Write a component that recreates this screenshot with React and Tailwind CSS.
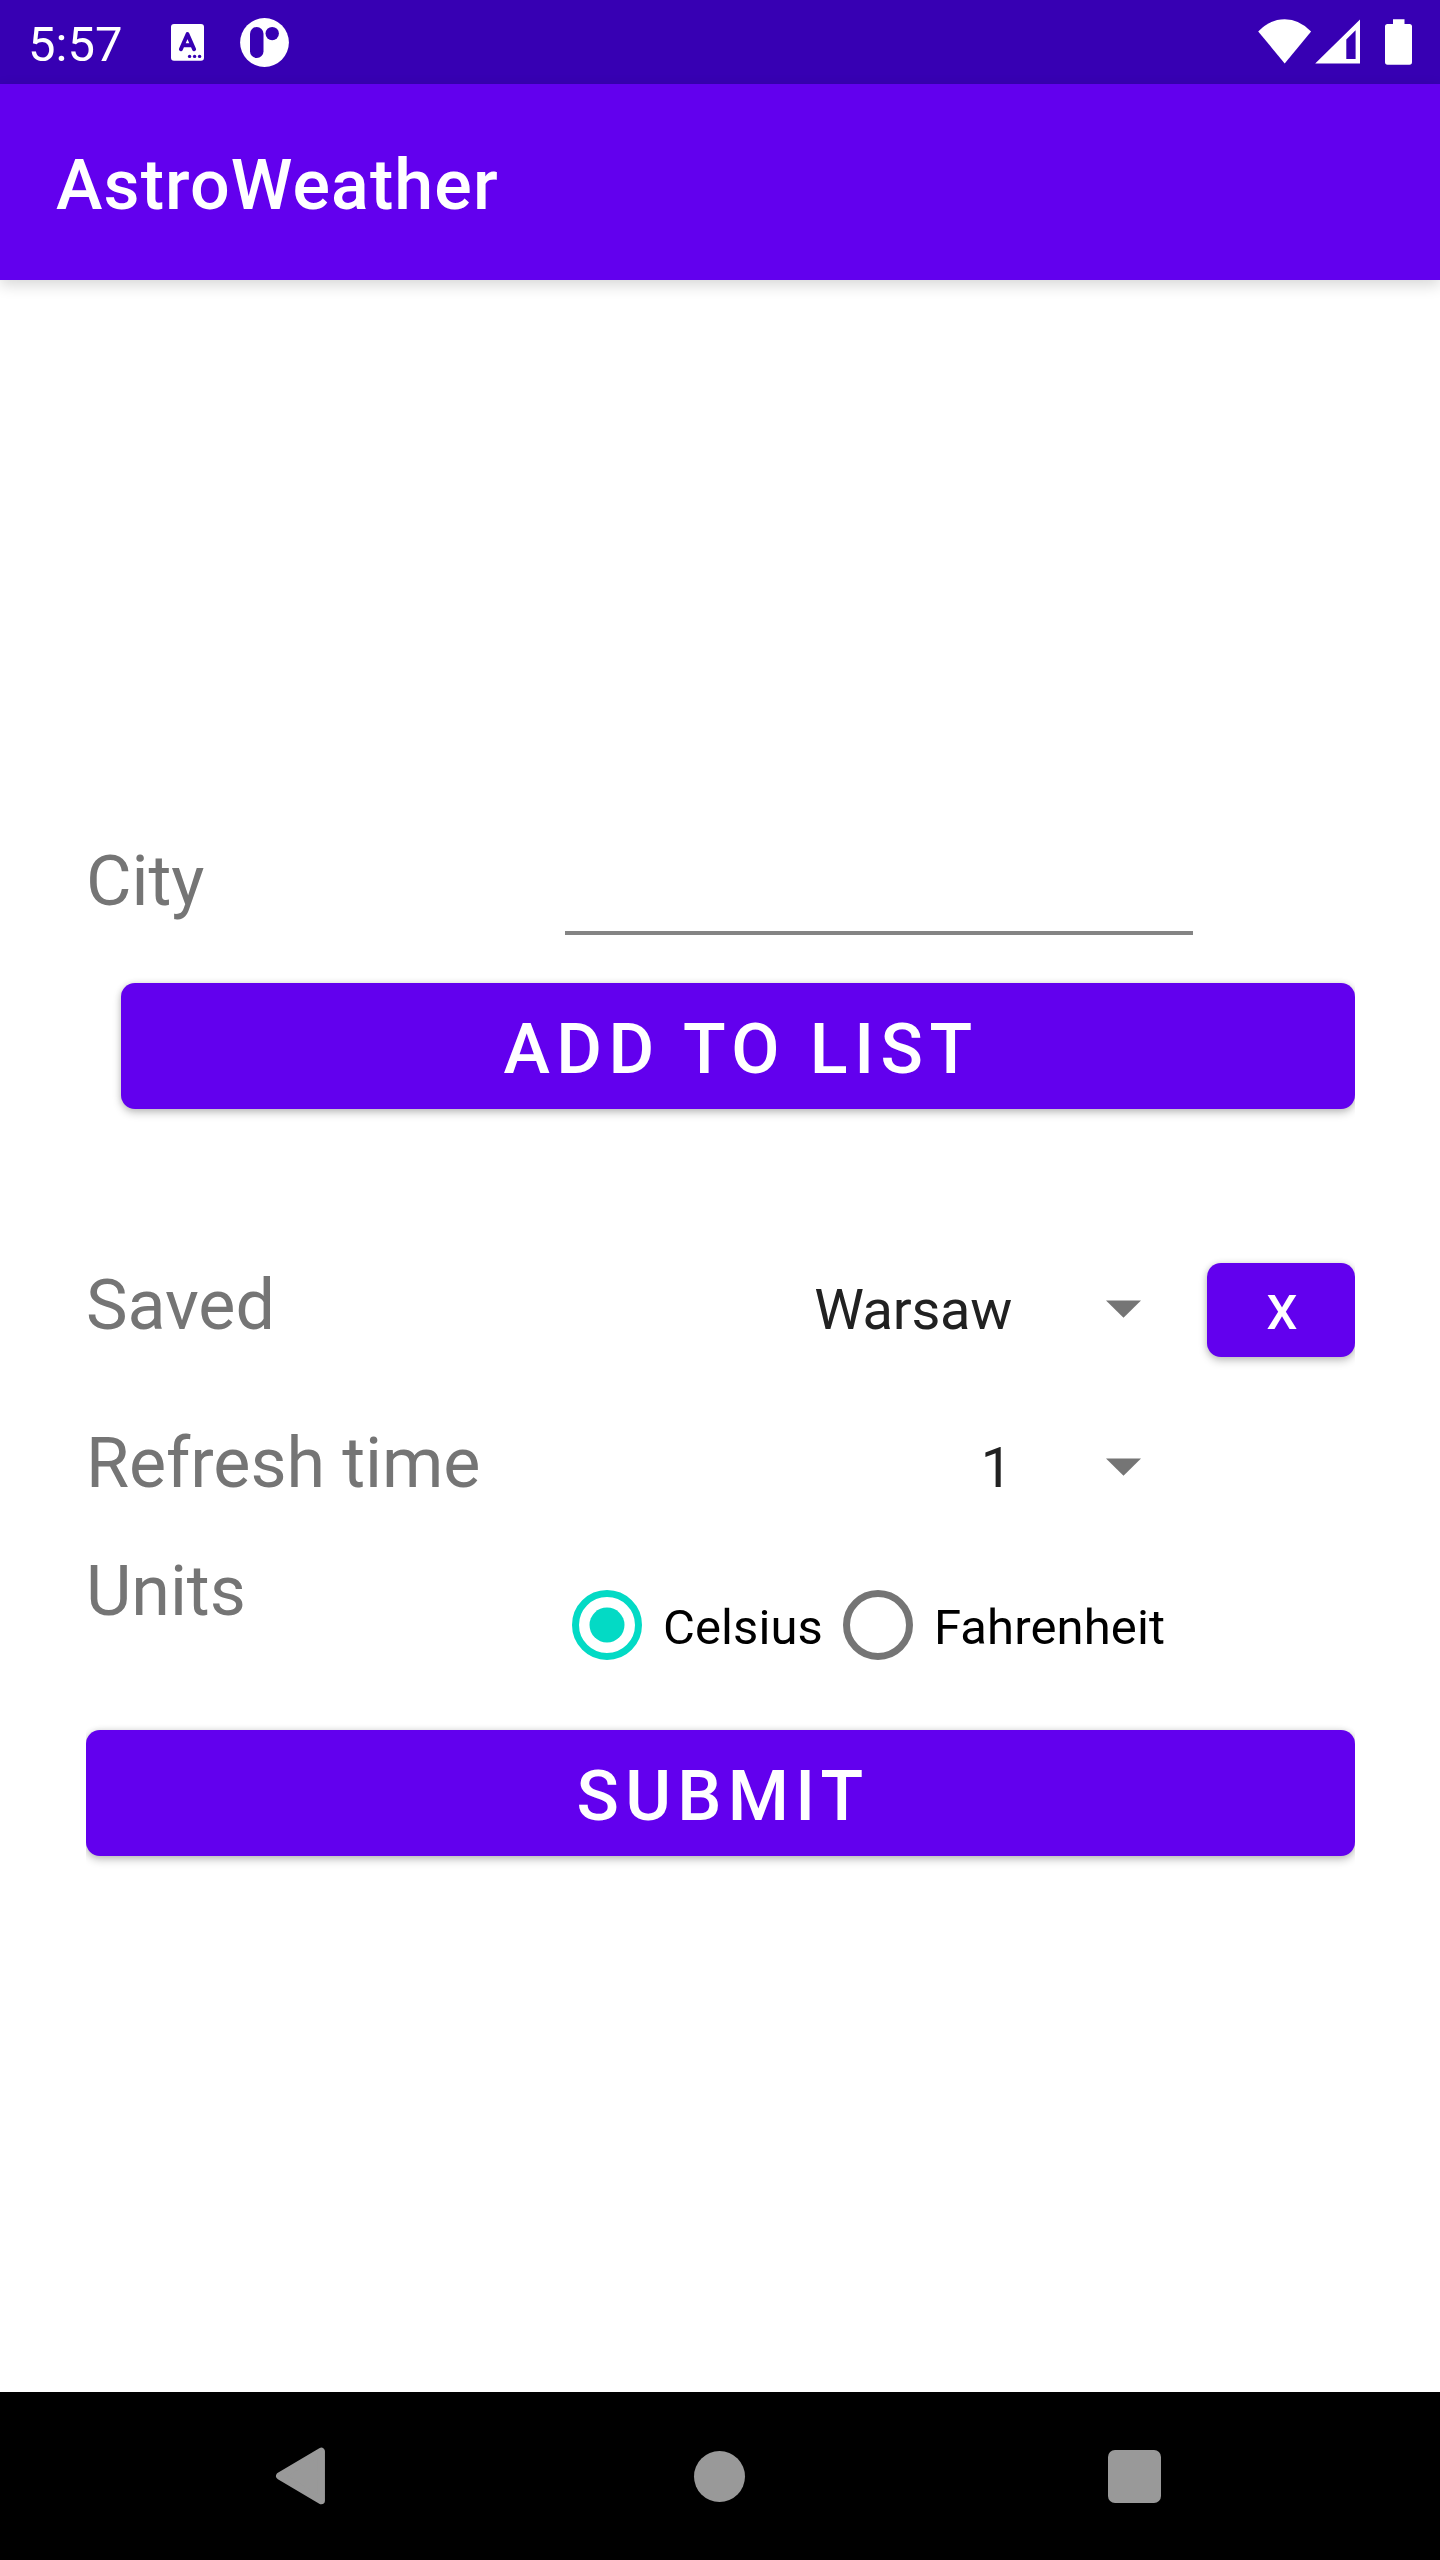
import React from "react";

const BUTTON =
  "flex items-center justify-center rounded-[14px] bg-[#6200ee] font-medium text-white shadow-[0_4px_8px_rgba(0,0,0,0.22),0_0_6px_rgba(0,0,0,0.12)]";
const LABEL = "text-[70px] leading-[100px] tracking-[-0.08px] text-[#757575] whitespace-nowrap";

function StatusBar() {
  return (
    <div className="flex h-[84px] items-center bg-[#3700b3] pl-[28px] text-white">
      <span className="w-[143px] pt-[5px] text-[49px] leading-[82px]">5:57</span>
      <svg width="33" height="84" viewBox="171 0 33 84">
        <rect x="171" y="24" width="33" height="36.7" rx="3" fill="#fff" />
        <path d="M180.9 49.2 L187.5 34.2 L194.1 49.2 M183 45.2 H192" fill="none" stroke="#3700b3" strokeWidth="4" strokeLinecap="round" strokeLinejoin="round" />
        <g fill="#3700b3">
          <circle cx="189.6" cy="56.4" r="1.7" />
          <circle cx="194.6" cy="56.4" r="1.7" />
          <circle cx="199.6" cy="56.4" r="1.7" />
        </g>
      </svg>
      <svg className="ml-[35px]" width="52" height="84" viewBox="239 0 52 84">
        <circle cx="264.5" cy="42.5" r="24.4" fill="#fff" />
        <rect x="250" y="27" width="13.5" height="31" rx="6.75" fill="#3700b3" />
        <circle cx="272.2" cy="33.6" r="6.7" fill="#3700b3" />
      </svg>
      <svg className="ml-auto" width="190" height="84" viewBox="1250 0 190 84" fill="#fff">
        <path d="M1258.2 31.5 Q1270 19.2 1284.7 19.2 Q1299.5 19.2 1311.1 31.5 L1284.7 63.4 Z" />
        <path fillRule="evenodd" d="M1315.2 63.6 L1360 19.6 V63.6 Z M1346.3 39.4 V59 H1355.6 V30.3 Z" />
        <path d="M1393 19.2 H1404.5 V24 H1409.5 Q1412 24 1412 26.5 V62 Q1412 64.8 1409.5 64.8 H1387.5 Q1385 64.8 1385 62 V26.5 Q1385 24 1387.5 24 H1393 Z" />
      </svg>
    </div>
  );
}

function Spinner({ value }) {
  return (
    <div className="ml-auto flex items-center">
      <span className="text-[56px] leading-[94px] tracking-[-0.3px] text-[#212121]">{value}</span>
      <svg className="mr-[66px] mb-[3px] ml-[94px]" width="35" height="18" viewBox="0 0 35 18">
        <path d="M0 0.5 H35 L17.5 17.8 Z" fill="#757575" />
      </svg>
    </div>
  );
}

function Radio({ checked, label }) {
  return (
    <label className="flex items-center">
      <svg width="70" height="70" viewBox="0 0 70 70">
        <circle cx="35" cy="35" r="31.5" fill="none" strokeWidth="7" stroke={checked ? "#03dac5" : "#757575"} />
        {checked && <circle cx="35" cy="35" r="17.5" fill="#03dac5" />}
      </svg>
      <span className="mt-[5px] ml-[21px] text-[49px] leading-[58px] tracking-[0.1px] whitespace-nowrap text-black">{label}</span>
    </label>
  );
}

export default function App() {
  return (
    <div className="flex h-[2560px] w-[1440px] flex-col overflow-hidden bg-white font-['Roboto',sans-serif]">
      <StatusBar />
      <header className="z-10 flex h-[196px] items-center bg-[#6200ee] pt-[6px] pl-[56px] shadow-[0_5px_14px_rgba(0,0,0,0.16)]">
        <h1 className="text-[70px] leading-[82px] font-medium tracking-[1.1px] text-white">AstroWeather</h1>
      </header>

      <main className="mr-[85px] ml-[86px] flex flex-1 flex-col overflow-x-clip pt-[551px]">
        <div className="flex h-[152px] items-start">
          <span className={LABEL}>City</span>
          <div className="mr-[162px] ml-auto h-[104px] w-[628px] border-b-4 border-[#848484]" />
        </div>
        <button className={`${BUTTON} ml-[35px] h-[126px] pt-[6px] pl-[6px] text-[70px] leading-[82px] tracking-[6.5px]`}>
          ADD TO LIST
        </button>

        <div className="mt-[154px] flex h-[94px] items-center">
          <span className={`${LABEL} pb-[10px]`}>Saved</span>
          <Spinner value="Warsaw" />
          <button className={`${BUTTON} h-[94px] w-[148px] pt-[5px] pl-[2px] text-[49px]`}>X</button>
        </div>

        <div className="mt-[64px] flex h-[94px] items-center pr-[148px]">
          <span className={`${LABEL} pb-[10px]`}>Refresh time</span>
          <Spinner value="1" />
        </div>

        <div className="mt-[26px] flex h-[189px] items-start">
          <span className={`${LABEL} w-[486px]`}>Units</span>
          <div className="flex h-[168px] items-center">
            <div className="w-[271px]">
              <Radio checked label="Celsius" />
            </div>
            <Radio label="Fahrenheit" />
          </div>
        </div>

        <button className={`${BUTTON} h-[126px] pt-[6px] pl-[5px] text-[70px] leading-[82px] tracking-[6.3px]`}>
          SUBMIT
        </button>
      </main>

      <nav className="flex h-[168px] items-center bg-black pl-[275px]">
        <svg width="51" height="60" viewBox="0 0 51 60">
          <path d="M4.8 30 L46.2 5.5 V54.5 Z" fill="#999" stroke="#999" strokeWidth="7.5" strokeLinejoin="round" />
        </svg>
        <div className="ml-[368px] h-[51px] w-[51px] rounded-full bg-[#999]" />
        <div className="ml-[363px] h-[53px] w-[53px] rounded-[7px] bg-[#999]" />
      </nav>
    </div>
  );
}
